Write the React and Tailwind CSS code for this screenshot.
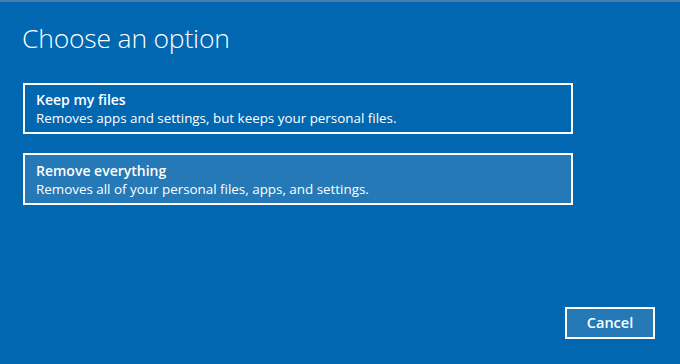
export default function App() {
  return (
    <div
      className="w-[680px] h-[364px] bg-[#0067b0] flex flex-col overflow-hidden text-white"
      style={{ fontFamily: '"Open Sans", "Noto Sans", sans-serif' }}
    >
      <div className="h-[2px] bg-[#4c7cab] shrink-0" />
      <div className="flex-1 flex flex-col pl-[23px] pr-[25px]">
        <h1 className="mt-[19px] ml-[-1px] text-[26.5px] font-light leading-[34px] tracking-[-0.2px]">
          Choose an option
        </h1>
        <div className="mt-[28px] flex flex-col gap-[19px]">
          <button className="w-[550px] h-[51px] border-2 border-white text-left pl-[11px] flex flex-col justify-center">
            <span className="text-[14px] font-semibold leading-[19px]">Keep my files</span>
            <span className="text-[13.4px] leading-[18px]">
              Removes apps and settings, but keeps your personal files.
            </span>
          </button>
          <button className="w-[550px] h-[52px] border-2 border-white bg-[#2479b6] text-left pl-[11px] flex flex-col justify-center">
            <span className="text-[14px] font-semibold leading-[19px]">Remove everything</span>
            <span className="text-[13.4px] leading-[18px]">
              Removes all of your personal files, apps, and settings.
            </span>
          </button>
        </div>
        <div className="mt-auto mb-[25px] flex justify-end">
          <button className="w-[90px] h-[32px] border-2 border-white bg-[#2479b6] text-[14.5px] font-semibold">
            Cancel
          </button>
        </div>
      </div>
    </div>
  );
}
